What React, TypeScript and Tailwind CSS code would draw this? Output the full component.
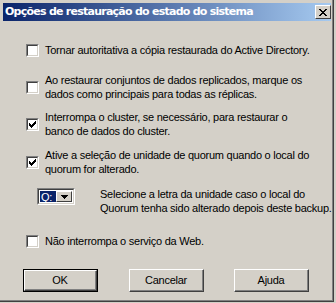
const Check = ({ checked }: { checked?: boolean }) => (
  <div className="w-[13px] h-[13px] shrink-0 border-t border-l border-t-[#808080] border-l-[#808080] border-b border-r border-b-white border-r-white">
    <div className="w-[11px] h-[11px] bg-white border-t border-l border-t-[#404040] border-l-[#404040] border-b border-r border-b-[#d4d0c8] border-r-[#d4d0c8] flex items-center justify-center">
      {checked && (
        <svg width="7" height="7" viewBox="0 0 7 7" shapeRendering="crispEdges">
          <path d="M0 2h1v1h1v1h1v-1h1v-1h1v-1h1v-1h1v3h-1v1h-1v1h-1v1h-1v1h-1v-1h-1v-1h-1z" fill="#000" />
        </svg>
      )}
    </div>
  </div>
);

const Btn = ({ label, isDefault }: { label: string; isDefault?: boolean }) => (
  <div className={`w-[75px] h-[23px] ${isDefault ? "border border-black" : ""}`}>
    <div className="w-full h-full border-t border-l border-t-white border-l-white border-b border-r border-b-[#404040] border-r-[#404040]">
      <div className="w-full h-full border-b border-r border-b-[#808080] border-r-[#808080] flex items-center justify-center text-black">
        {label}
      </div>
    </div>
  </div>
);

export default function App() {
  return (
    <div className="relative w-[336px] h-[303px] bg-[#d4d0c8] font-['Liberation_Sans',Arial,sans-serif] text-[11px] leading-[14px] tracking-[-0.25px] text-black overflow-hidden">
      <div className="w-[334px] h-[302px] border-r border-b border-r-[#404040] border-b-[#404040]">
        <div className="w-full h-full border-r border-b border-r-[#808080] border-b-[#808080] pt-[3px] pl-[3px] pr-[1px]">
          <div className="h-[18px] flex items-center bg-[linear-gradient(to_right,#0a246a,#a6caf0)] pl-[2px] pr-[20px]">
            <span className="whitespace-nowrap text-white font-bold text-[11px] font-['DejaVu_Sans',sans-serif] tracking-[-0.75px]">
              Opções de restauração do estado do sistema
            </span>
          </div>

          <div className="pl-[23px] pt-[22px] flex flex-col whitespace-nowrap">
            <div className="flex items-center gap-[6px] h-[14px]">
              <Check />
              <span>Tornar autoritativa a cópia restaurada do Active Directory.</span>
            </div>

            <div className="flex items-center gap-[6px] mt-[16px]">
              <Check />
              <span>
                Ao restaurar conjuntos de dados replicados, marque os
                <br />
                dados como principais para todas as réplicas.
              </span>
            </div>

            <div className="flex items-center gap-[6px] mt-[9px]">
              <Check checked />
              <span>
                Interrompa o cluster, se necessário, para restaurar o
                <br />
                banco de dados do cluster.
              </span>
            </div>

            <div className="flex items-center gap-[6px] mt-[10px]">
              <Check checked />
              <span>
                Ative a seleção de unidade de quorum quando o local do
                <br />
                quorum for alterado.
              </span>
            </div>

            <div className="flex items-start gap-[25px] mt-[11px] pl-[11px]">
              <div className="shrink-0 mt-[1px] w-[38px] h-[17px] border-t border-l border-t-[#808080] border-l-[#808080] border-b border-r border-b-white border-r-white">
                <div className="w-full h-full border-t border-l border-t-[#404040] border-l-[#404040] border-b border-r border-b-[#d4d0c8] border-r-[#d4d0c8] bg-white flex p-[1px]">
                  <div className="flex-1 bg-[#0a246a] text-white leading-[13px] pl-[1px]">Q:</div>
                  <div className="w-[16px] bg-[#d4d0c8] border-t border-l border-t-white border-l-white border-b border-r border-b-[#404040] border-r-[#404040] flex items-center justify-center">
                    <svg width="7" height="4" viewBox="0 0 7 4" shapeRendering="crispEdges">
                      <path d="M0 0h7v1h-1v1h-1v1h-1v1h-1v-1h-1v-1h-1v-1h-1z" fill="#000" />
                    </svg>
                  </div>
                </div>
              </div>
              <span>
                Selecione a letra da unidade caso o local do
                <br />
                Quorum tenha sido alterado depois deste backup.
              </span>
            </div>

            <div className="flex items-center gap-[6px] mt-[19px] h-[14px]">
              <Check />
              <span>Não interrompa o serviço da Web.</span>
            </div>
          </div>

          <div className="flex pl-[20px] mt-[21px]">
            <Btn label="OK" isDefault />
            <div className="ml-[31px]">
              <Btn label="Cancelar" />
            </div>
            <div className="ml-[30px]">
              <Btn label="Ajuda" />
            </div>
          </div>
        </div>
      </div>

      {/* close box sits over the caption bar */}
      <div className="absolute left-[315px] top-[5px] w-[16px] h-[14px] bg-[#d4d0c8] border-t border-l border-t-white border-l-white border-b border-r border-b-[#404040] border-r-[#404040] flex items-center justify-center">
        <svg width="8" height="7" viewBox="0 0 8 7" shapeRendering="crispEdges">
          <path d="M0 0h2v1h1v1h2v-1h1v-1h2v1h-1v1h-1v1h-1v1h1v1h1v1h1v1h-2v-1h-1v-1h-2v1h-1v1h-2v-1h1v-1h1v-1h1v-1h-1v-1h-1z" fill="#000" />
        </svg>
      </div>
    </div>
  );
}
